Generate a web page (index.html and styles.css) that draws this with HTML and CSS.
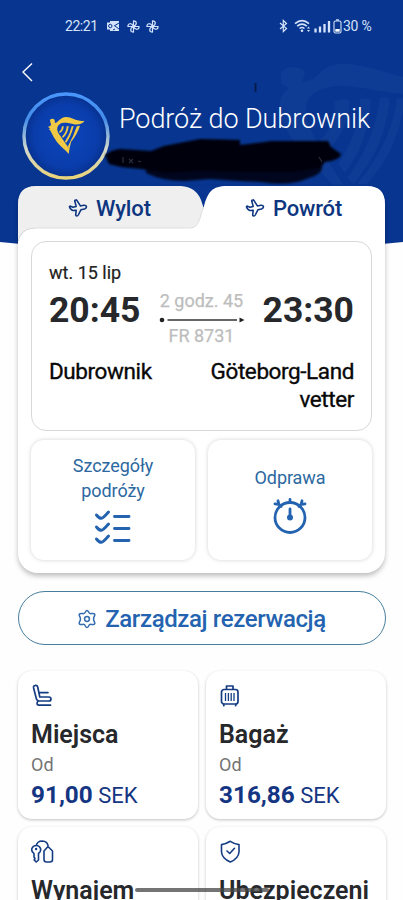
FILE: index.html
```html
<!DOCTYPE html>
<html lang="pl">
<head>
<meta charset="utf-8">
<title>Podróż do Dubrownik</title>
<link rel="stylesheet" href="styles.css">
</head>
<body>
<main class="screen">
  <svg class="backdrop" viewBox="0 0 403 250" aria-hidden="true">
    <path fill="#073590" d="M0 0H403V242Q201 264 0 242Z"/>
    <g fill="#1a4699" opacity=".38">
      <path d="M281 73Q284 67 292 67Q304 67 305 74L302 82Q313 82 323 70C340 57 366 67 403 77V94C371 91 348 82 326 88C310 92 305 101 306 113C308 132 325 155 343 185H333C314 163 284 139 280 110C278 101 283 92 289 88L281 84Z"/>
      <path d="M334 101Q347 97 350 101Q349 131 327 150L320 140Q336 126 334 101ZM360 99Q368 97 371 100Q368 143 345 173L338 164Q360 132 360 99ZM380 98Q386 96 390 99C385 139 373 159 354 184L347 178Q374 143 380 98ZM397 98H403V112C394 149 384 164 367 184H357C381 155 393 129 397 98Z"/>
    </g>
  </svg>

  <header class="header">
    <div class="status">
      <span class="clock">22:21</span>
      <svg class="mail" width="13" height="12" viewBox="0 0 13 12"><path fill="#d5e3fa" d="M3 1h9v10H3z"/><path fill="#d5e3fa" d="M0 2.5h7v7H0z"/><circle cx="3.3" cy="6" r="1.7" fill="none" stroke="#073590"/><path d="M7 6l5-3M8 6l4 3M6 10l2-1" stroke="#073590"/></svg>
      <svg class="fan" width="13" height="13" viewBox="0 0 13 13"><path id="pinwheel" d="M6.5 6.5V.9C10 .9 10.4 4.6 6.5 6.5H12.1C12.1 10 8.4 10.4 6.5 6.5V12.1C3 12.1 2.6 8.4 6.5 6.5H.9C.9 3 4.6 2.6 6.5 6.5Z" fill="none" stroke="#d5e3fa" stroke-width="1.2" stroke-linejoin="round"/></svg>
      <svg class="fan" width="13" height="13" viewBox="0 0 13 13"><use href="#pinwheel"/></svg>
      <span class="spacer"></span>
      <svg width="9" height="14" viewBox="0 0 9 14"><path d="M1 4l6.5 5.5L4.3 12.5V1.5L7.5 4.5L1 10" fill="none" stroke="#d5e3fa" stroke-width="1.2"/></svg>
      <svg class="wifi" width="17" height="14" viewBox="0 0 17 14"><path d="M1 4.7Q8 -1.5 15 4.7M3.2 7.2Q8 3 12.8 7.2M5.5 9.5Q8 7.5 10.5 9.5" fill="none" stroke="#d5e3fa" stroke-width="1.6"/><circle cx="8" cy="11.8" r="1.3" fill="#d5e3fa"/><path d="M13 9.5l1.5-2 1.5 2zM13 11l1.5 2 1.5-2z" fill="#d5e3fa"/></svg>
      <svg class="signal" width="17" height="13" viewBox="0 0 17 13"><path d="M1.5 12.5V8.5M6 12.5V6.5M10.5 12.5V4M15 12.5V1" stroke="#d5e3fa" stroke-width="2.3"/></svg>
      <svg class="battery" width="9" height="15" viewBox="0 0 9 15"><rect x="1" y="2" width="7" height="12" rx="1.5" fill="none" stroke="#d5e3fa" stroke-width="1.1"/><path d="M3 1h3" stroke="#d5e3fa" stroke-width="1.4"/><path d="M2.3 10h4.4v2.7H2.3z" fill="#fff"/></svg>
      <span class="percent">30 %</span>
    </div>
    <svg class="back" width="12" height="20" viewBox="0 0 12 20"><path d="M10 1.5L1 10L10 19" fill="none" stroke="#fff" stroke-width="1.4"/></svg>
    <div class="trip">
      <svg class="avatar" width="88" height="88" viewBox="0 0 88 88">
        <defs>
          <linearGradient id="ring" x1="0" y1="0" x2="0" y2="1"><stop offset="0" stop-color="#4996fb"/><stop offset=".3" stop-color="#458de8"/><stop offset=".65" stop-color="#d1d8cd"/><stop offset="1" stop-color="#ead47a"/></linearGradient>
          <radialGradient id="disc"><stop offset="0" stop-color="#0b45bb"/><stop offset=".75" stop-color="#0a3dab"/><stop offset="1" stop-color="#06308c"/></radialGradient>
        </defs>
        <circle cx="44" cy="44" r="42" fill="url(#disc)" stroke="url(#ring)" stroke-width="3.4"/>
        <g fill="#f1c944">
          <path d="M28 28.5Q28 26.5 30.5 26.8Q33 27 32.8 29.5L33 31C36 31 38 25 44 25C50 25 55 30 62.5 28.7Q60 33 53 32.4C46 31 41 30 38 32C34 34.5 35 39 37 42L47.4 57L46.7 62C43 57 37 54 33 47C29 41 29 38 26.8 37.5L28 36.3L26 35L27.8 34Q30 33 28.5 31Z"/>
          <path d="M39.8 34.5L41.6 34Q42 38.5 37.7 41L36.9 39.7Q39.8 38 39.8 34.5ZM44.7 34.2L46.7 34Q46 41.5 40.9 46L40 44.7Q44.4 40 44.7 34.2ZM49.7 34.2L51.7 34Q49 44.5 44 51L43 49.6Q48 42 49.7 34.2ZM54.8 34.2L58 33.8Q55 43 49 50L47.2 58L45.9 54.3Q51.6 44 54.8 34.2Z"/>
        </g>
      </svg>
      <h1 class="title">Podróż do Dubrownik</h1>
    </div>
    <svg class="scribble" viewBox="0 0 240 105" aria-hidden="true">
      <defs><filter id="soft" x="-5%" y="-15%" width="110%" height="130%"><feGaussianBlur stdDeviation="1"/></filter></defs>
      <g filter="url(#soft)">
        <path fill="#020711" opacity=".88" d="M44 85Q60 80 90 83H220Q222 92 207 96Q187 105 158 100L137 99L108 97L82 99Q60 99 44 91Z"/>
        <path fill="#010308" d="M3 73Q9 68 18 67L49 69L62 64L98 57L138 58V63L170 59H226L229 65L239 72Q238 78 223 80L218 86L190 90H145L96 89L64 91L39 87L19 85L7 82Z"/>
      </g>
      <path d="M153.500 1v9" stroke="#061c4e" stroke-width="2"/>
      <path d="M21 75v6M27 77l4 4M31 77l-4 4M36 79l3 1M217 75l3 5" stroke="#29313b" stroke-width="1.2"/>
    </svg>
  </header>

  <section class="panel">
    <nav class="tabs">
      <svg class="tabshape" viewBox="0 0 367 56" preserveAspectRatio="none" aria-hidden="true">
        <path fill="#efefef" d="M0 56V18Q0 0 18 0H163Q178 1 183 14L185 20V42H18Q3 42 0 56Z"/>
        <path fill="#fff" d="M0 56Q3 42 18 42H172C182 42 183 28 186 20C190 6 194 0 209 0H349Q367 0 367 18V56Z"/>
        <path fill="none" stroke="#dedede" d="M.5 54Q3 42 18 42H172C182 42 182 29 185.5 21"/>
      </svg>
      <div class="tab tab-out"><svg width="20" height="20" viewBox="0 0 20 20"><path id="plane" d="M8.2 8.4L6.8 3.3Q6.5 2 7.8 1.9Q8.6 1.8 9.2 2.8L12.4 7.9L15.8 7.3Q18.2 7.100 18.500 8.700Q18.6 10.2 16.500 10.900L12.900 11.800L10.300 17Q9.700 18.100 8.700 18Q7.500 17.800 7.700 16.600L8.200 12.300L5.200 12.400Q2.800 12.200 1.500 8.900Q1.400 8 2.400 8.100L4.900 9.200Z" fill="none" stroke="#0d3580" stroke-width="1.55" stroke-linejoin="round"/></svg><span>Wylot</span></div>
      <div class="tab tab-back"><svg width="20" height="20" viewBox="0 0 20 20"><use href="#plane"/></svg><span>Powrót</span></div>
    </nav>
    <div class="panelbody">
      <article class="flight">
        <p class="date">wt. 15 lip</p>
        <div class="times">
          <strong class="time">20:45</strong>
          <div class="duration">
            <span>2 godz. 45</span>
            <svg width="86" height="6" viewBox="0 0 86 6"><circle cx="3" cy="3" r="2.3" fill="#222"/><path d="M8.5 3H78" stroke="#333" stroke-width="1.5"/><path d="M80.5 0.4L85.5 3L80.5 5.6Z" fill="#222"/></svg>
            <span class="number">FR 8731</span>
          </div>
          <strong class="time arrive">23:30</strong>
        </div>
        <div class="places"><span class="from">Dubrownik</span><span class="to">Göteborg-Land<br>vetter</span></div>
      </article>
      <div class="actions">
        <div class="action">
          <span>Szczegóły<br>podróży</span>
          <svg class="list" width="36" height="34" viewBox="0 0 36 34"><g fill="none" stroke="#2463b0" stroke-width="2.9" stroke-linecap="round" stroke-linejoin="round"><path d="M1.500 5Q4 8.300 6.500 8.300Q8 8.300 13.500 2M19.5 6.500H34M1.500 17Q4 20.300 6.500 20.300Q8 20.300 13.500 14M19.5 18.500H34M1.500 29Q4 32.300 6.500 32.300Q8 32.300 13.500 26M19.5 30.500H34"/></g></svg>
        </div>
        <div class="action checkin">
          <span>Odprawa</span>
          <svg class="watch" width="34" height="38" viewBox="0 0 34 38"><g fill="none" stroke="#2463b0" stroke-width="2.8" stroke-linecap="round"><circle cx="17" cy="20.5" r="15"/><path d="M17 2.5V5.5M2 6.8L6 7.5L5 3.8M6 7.5L8 9.5M32 6.8L28 7.5L29 3.8M28 7.5L26 9.5M17 12V20"/></g><circle cx="17" cy="20.5" r="3" fill="#2463b0"/></svg>
        </div>
      </div>
    </div>
  </section>

  <button class="manage">
    <svg width="18" height="20" viewBox="0 0 18 20"><path d="M7.4 3Q9 -.2 10.6 3Q11.4 5 13.5 4.6Q17.8 4 16.5 7Q14.6 10 16.5 13Q17.8 16 13.5 15.4Q11.4 15 10.6 17Q9 20.2 7.4 17Q6.6 15 4.5 15.4Q.2 16 1.5 13Q3.4 10 1.5 7Q.2 4 4.5 4.6Q6.6 5 7.4 3Z" fill="none" stroke="#326caf" stroke-width="1.5"/><circle cx="9" cy="10" r="2.4" fill="none" stroke="#326caf" stroke-width="1.5"/></svg>
    <span>Zarządzaj rezerwacją</span>
  </button>

  <section class="products">
    <article class="product">
      <svg width="24" height="24" viewBox="0 0 24 24"><g fill="none" stroke="#143c83" stroke-width="1.7" stroke-linecap="round" stroke-linejoin="round"><path d="M2.600 4Q2.200 1.700 4.200 1.400Q6.200 1 6.700 3L8.800 13H17.800Q20 13.200 20 15Q20 17 17.800 17H8.200Q6 17 5.300 14.500ZM9 8.600H17M6.800 17.300Q4.800 20.800 7.800 21.200H19.500"/></g></svg>
      <h2>Miejsca</h2><p>Od</p><div class="price"><b>91,00</b> SEK</div>
    </article>
    <article class="product">
      <svg width="24" height="24" viewBox="0 0 24 24"><g fill="none" stroke="#143c83" stroke-width="1.7" stroke-linejoin="round"><rect x="2.500" y="5.500" width="16.500" height="14.500" rx="2.500"/><path d="M7.500 5.500V2H14V5.500M4.500 20L5 22.400M17 20L16.500 22.400"/><path d="M6.500 9V17M9.400 9V17M12.200 9V17M15 9V17" stroke-width="1.3"/></g></svg>
      <h2>Bagaż</h2><p>Od</p><div class="price"><b>316,86</b> SEK</div>
    </article>
    <article class="product">
      <svg width="24" height="24" viewBox="0 0 24 24"><g fill="none" stroke="#143c83" stroke-width="1.6" stroke-linejoin="round"><path d="M3 13.5Q0 11 .9 8.5Q2 5.5 5.2 5.5Q8.500 5.500 9.500 8.500Q10.300 11.500 7.500 13.500V20L5.200 22L3.200 20L4 18.500L3 17ZM5 6Q6.200 1 11.200 1Q16.500 1.200 17.200 6.300M13 11L17 6.500L21.500 11V19.500Q21.500 22 19 22H15.500Q13 22 13 19.500Z"/></g><circle cx="5.100" cy="9" r="1.200" fill="#143c83"/></svg>
      <h2>Wynajem</h2>
    </article>
    <article class="product">
      <svg width="24" height="24" viewBox="0 0 24 24"><g fill="none" stroke="#143c83" stroke-width="1.6" stroke-linecap="round" stroke-linejoin="round"><path d="M11.300 1.300Q16 4.300 20 4.600V12Q19.500 18.500 11.300 22Q3 18.500 2.500 12V4.600Q6.500 4.300 11.300 1.300ZM8 11L10.700 13.500L15.500 8.300"/></g></svg>
      <h2>Ubezpieczeni</h2>
    </article>
  </section>
  <div class="gesture"></div>
</main>
</body>
</html>
```
FILE: styles.css
```css
* { box-sizing: border-box; }
body { margin: 0; background: #fefefe; font-family: Roboto, sans-serif; color: #26282b; }
h1, h2, p { margin: 0; }
svg { display: block; flex: none; }
.screen { position: relative; width: 403px; height: 900px; overflow: hidden; }
.backdrop { position: absolute; top: 0; left: 0; width: 403px; height: 250px; }

.header { position: relative; height: 186px; }
.status { display: flex; align-items: center; height: 52px; padding: 0 30px 0 65px; color: #d5e3fa; font-size: 14px; line-height: 16px; white-space: nowrap; }
.clock { width: 32px; letter-spacing: -.45px; }
.mail { margin-left: 10px; }
.fan { margin-left: 7px; }
.fan + .fan { margin-left: 6px; }
.spacer { flex: 1; }
.wifi { margin-left: 6px; }
.signal { margin-left: 3px; }
.battery { margin-left: 2px; }
.percent { margin-left: 1px; width: 30px; letter-spacing: -.25px; }
.back { margin: 10px 0 0 22px; }
.trip { display: flex; margin: 10px 0 0 22px; }
.title { margin: 10px 0 0 9px; color: #fff; font-size: 27px; line-height: 34px; font-weight: 300; letter-spacing: -.08px; white-space: nowrap; }
.scribble { position: absolute; left: 102px; top: 82px; width: 240px; height: 105px; }

.panel { position: relative; width: 367px; height: 387px; margin-left: 18px; border-radius: 18px 18px 20px 20px; background: #fff; box-shadow: 0 3px 5px rgba(0, 0, 0, .25); }
.tabs { display: flex; height: 55px; position: relative; background: #073590; border-radius: 18px 18px 0 0; }
.tabshape { position: absolute; inset: 0; width: 367px; height: 56px; }
.tab { position: relative; display: flex; gap: 8px; height: 44px; align-items: center; color: #0d3580; font-size: 22px; font-weight: 500; letter-spacing: -.15px; }
.tab-out { width: 186px; padding-left: 50px; }
.tab-back { padding-left: 41px; }
.panelbody { position: relative; padding: 0 13px; }
.flight { height: 190px; border: 1px solid #d8d8d8; border-radius: 15px; padding: 20px 17px 0 17px; background: #fff; }
.date { font-size: 18px; line-height: 21px; color: #222; -webkit-text-stroke: .2px; }
.times { display: flex; justify-content: space-between; height: 58px; margin-top: 7px; }
.time { width: 93px; font-size: 35.5px; line-height: 40px; font-weight: 700; }
.arrive { text-align: right; }
.duration { display: flex; flex-direction: column; align-items: center; color: #bdbdbd; font-size: 18px; line-height: 20px; white-space: nowrap; font-weight: 400; -webkit-text-stroke: .25px; padding-top: 1px; }
.duration svg { margin-top: 6px; }
.number { margin-top: 3px; }
.places { display: flex; justify-content: space-between; margin-top: 9px; color: #080808; font-size: 22.5px; line-height: 28px; font-weight: 400; letter-spacing: -.4px; -webkit-text-stroke: .35px; white-space: nowrap; }
.to { text-align: right; }
.actions { display: grid; grid-template-columns: 164px 164px; gap: 13px; margin-top: 9px; }
.action { height: 120px; padding-top: 14px; display: flex; flex-direction: column; align-items: center; border-radius: 13px; box-shadow: 0 0 4px rgba(0, 0, 0, .18); color: #2c689f; font-size: 18px; line-height: 24.5px; letter-spacing: -.08px; text-align: center; }
.list { margin-top: 7px; }
.checkin { padding-top: 26px; }
.watch { margin-top: 6px; }

.manage { display: flex; justify-content: center; align-items: center; gap: 9px; width: 368px; height: 54px; margin: 18px 0 0 18px; padding: 1px 0 0; border: 1px solid #477e9e; border-radius: 27px; background: #fff; color: #2463b0; font: 500 24px/28px Roboto, sans-serif; letter-spacing: -.38px; white-space: nowrap; }

.products { display: grid; grid-template-columns: 180px 180px; grid-auto-rows: 148px; gap: 8px; margin: 26px 0 0 18px; }
.product { padding: 13px 0 0 13px; border-radius: 14px; background: #fff; box-shadow: 0 1px 3px rgba(0, 0, 0, .24); }
.product h2 { margin-top: 11px; font-size: 25px; line-height: 32px; font-weight: 600; }
.product p { margin-top: 2px; font-size: 18px; line-height: 24px; color: #747474; }
.price { margin-top: 3px; font-size: 22px; line-height: 30px; color: #143582; }
.price b { font-size: 24.3px; font-weight: 700; }
.gesture { position: absolute; left: 135px; top: 888px; width: 134px; height: 4px; border-radius: 2px; background: rgba(70, 70, 70, .75); }
```
